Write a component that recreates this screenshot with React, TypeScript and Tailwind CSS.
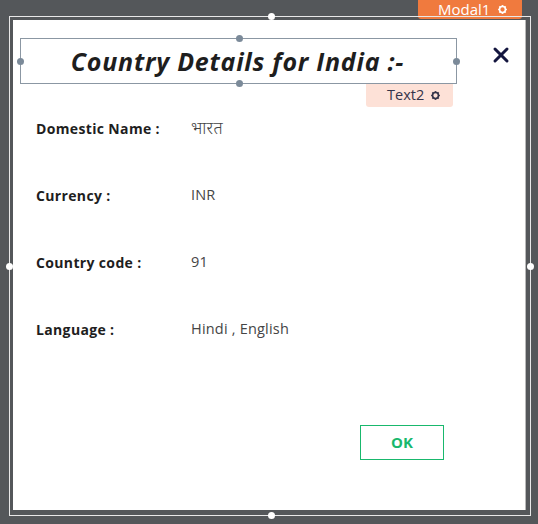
import React from "react";
import { X } from "lucide-react";

const rows: [string, string, string][] = [
  ["Domestic Name :", "भारत", "text-[17px] font-light"],
  ["Currency :", "INR", "text-[14.5px]"],
  ["Country code :", "91", "text-[14.5px]"],
  ["Language :", "Hindi , English", "text-[14.5px]"],
];

function Gear({ className = "" }: { className?: string }) {
  const teeth = [0, 45, 90, 135, 180, 225, 270, 315];
  return (
    <svg width="11" height="11" viewBox="0 0 12 12" className={className} fill="none" stroke="currentColor">
      <circle cx="6" cy="6" r="3.2" strokeWidth="1.7" />
      {teeth.map((a) => (
        <line
          key={a}
          x1="6"
          y1="1.2"
          x2="6"
          y2="2.8"
          strokeWidth="1.9"
          transform={`rotate(${a} 6 6)`}
        />
      ))}
    </svg>
  );
}

export default function App() {
  return (
    <div
      className="relative w-[538px] h-[524px] bg-[#54575a] overflow-hidden"
      style={{ fontFamily: '"Open Sans", "Noto Sans", "Noto Sans Devanagari", sans-serif' }}
    >
      {/* Modal1 tag */}
      <div className="absolute left-[418px] top-0 w-[104px] h-[19px] bg-[#f07a3e] rounded-b-[3px] flex items-center pl-[20px] gap-[7px] text-white text-[15px] leading-none">
        <span>Modal1</span>
        <Gear />
      </div>

      {/* selection frame */}
      <div className="absolute left-[9px] top-[16px] w-[522px] h-[500px] border border-[#e8e8e8]">
        <span className="absolute left-[258px] -top-[4px] w-[7px] h-[7px] rounded-full bg-white" />
        <span className="absolute left-[258px] -bottom-[4px] w-[7px] h-[7px] rounded-full bg-white" />
        <span className="absolute -left-[4px] top-[246px] w-[7px] h-[7px] rounded-full bg-white" />
        <span className="absolute -right-[4px] top-[246px] w-[7px] h-[7px] rounded-full bg-white" />
      </div>

      {/* modal panel */}
      <div className="absolute left-[13px] top-[20px] w-[513px] h-[490px] bg-white border-r border-[#b9b9b9] flex flex-col">
        {/* header */}
        <div className="relative flex items-start pt-[18px] pl-[7px]">
          <div className="relative w-[437px] h-[46px] border border-[#8b97a3] flex items-center justify-center">
            <span className="text-[25px] font-bold italic text-[#1e1e1e] leading-none tracking-[0.75px] -ml-[2px]">
              Country Details for India :-
            </span>
            <span className="absolute left-[215px] -top-[4px] w-[7px] h-[7px] rounded-full bg-[#7b8a99]" />
            <span className="absolute left-[215px] -bottom-[4px] w-[7px] h-[7px] rounded-full bg-[#7b8a99]" />
            <span className="absolute -left-[4px] top-[19px] w-[7px] h-[7px] rounded-full bg-[#7b8a99]" />
            <span className="absolute -right-[4px] top-[19px] w-[7px] h-[7px] rounded-full bg-[#7b8a99]" />
            <div className="absolute left-[345px] top-[45px] w-[87px] h-[23px] bg-[#fde1d7] rounded-b-[3px] flex items-center pl-[21px] gap-[6px] text-[#34344a] text-[14.5px] leading-none">
              <span>Text2</span>
              <Gear />
            </div>
          </div>
          <X className="ml-[32px] mt-[5px] text-[#14163f]" size={24} strokeWidth={3} />
        </div>

        {/* rows */}
        <div className="flex flex-col pl-[23px] mt-[34px] gap-[47px]">
          {rows.map(([l, v, c]) => (
            <div key={l} className="flex items-center h-[20px]">
              <span className="w-[155px] text-[14px] font-bold text-[#1e1e1e] tracking-[0.35px]">{l}</span>
              <span className={`${c} text-[#454545] tracking-[0.2px]`}>{v}</span>
            </div>
          ))}
        </div>

        {/* footer */}
        <div className="flex justify-end mt-auto mb-[50px] pr-[81px]">
          <button className="w-[84px] h-[35px] border border-[#19b86d] text-[#19b86d] text-[15px] font-bold flex items-center justify-center">
            OK
          </button>
        </div>
      </div>
    </div>
  );
}
